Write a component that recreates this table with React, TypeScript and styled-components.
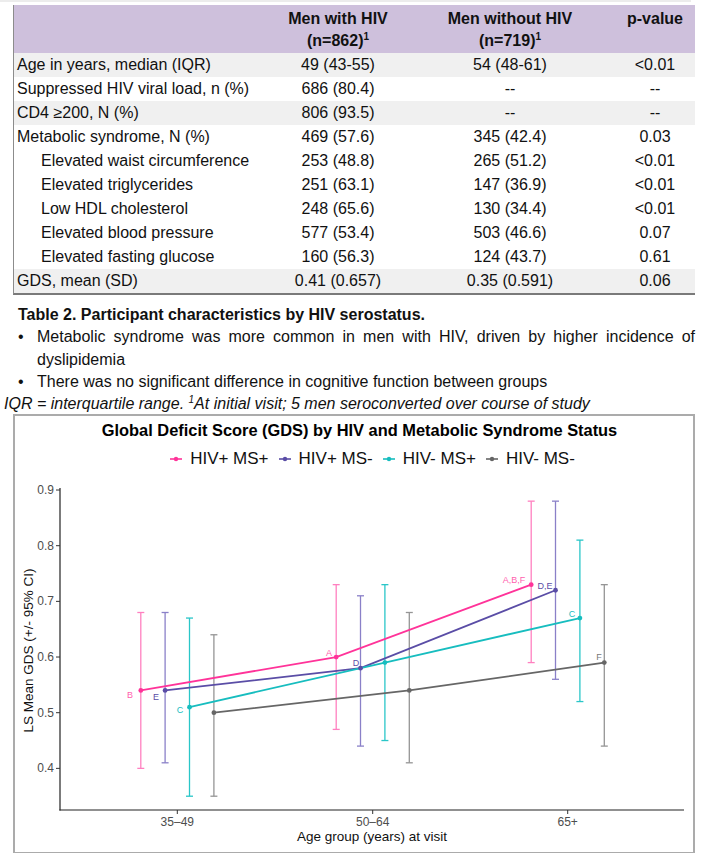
import React from 'react';
import styled, { createGlobalStyle } from 'styled-components';

const GlobalStyle = createGlobalStyle`
  body {
    margin: 0;
    background: #fff;
    font-family: "Liberation Sans", Arial, sans-serif;
    color: #111;
  }
`;

const Page = styled.div`
  width: 725px;
`;

const TopStrip = styled.div`
  width: 691px;
  height: 2px;
  background: #ececec;
`;

const Content = styled.div`
  padding-left: 13px;
`;

const Table = styled.div`
  margin-top: 3px;
  width: 682px;
  box-sizing: border-box;
  border-left: 1px solid #8c8c8c;
  border-bottom: 2px solid #7a7a7a;
  font-size: 16px;
`;

const Row = styled.div<{ $shade?: boolean }>`
  display: grid;
  grid-template-columns: 250px 148px 196px 87px;
  height: 24px;
  align-items: center;
  background: ${(p) => (p.$shade ? '#f0f0f0' : '#fff')};
`;

const HeadRow = styled(Row)`
  height: 48px;
  align-items: start;
  background: #cec0dc;
  font-weight: 700;
  line-height: 22px;
  padding-top: 3px;
  box-sizing: border-box;
`;

const Label = styled.div<{ $sub?: boolean }>`
  padding-left: ${(p) => (p.$sub ? '27px' : '3px')};
  white-space: nowrap;
`;

const Cell = styled.div<{ $shift?: number }>`
  text-align: center;
  padding-left: ${(p) => p.$shift ?? 0}px;
  white-space: nowrap;
`;

const Sup = styled.sup`
  font-size: 10px;
  line-height: 0;
  vertical-align: 6px;
`;

const Caption = styled.div`
  margin-top: 9px;
  padding-left: 5px;
  font-weight: 700;
  font-size: 16px;
  line-height: 22px;
`;

const Bullets = styled.ul`
  list-style: none;
  margin: 0;
  padding: 0;
  width: 682px;
  font-size: 16px;
  line-height: 22.5px;
`;

const Bullet = styled.li`
  display: grid;
  grid-template-columns: 19px 1fr;
  padding-left: 5px;
  text-align: justify;
`;

const Footnote = styled.div`
  margin-left: -9px;
  font-style: italic;
  font-size: 16px;
  line-height: 20px;
`;

const ChartBox = styled.div`
  width: 682px;
  height: 440px;
  box-sizing: border-box;
  border: 2px solid #ababab;
  display: flex;
  flex-direction: column;
`;

const ChartTitle = styled.div`
  padding: 4px 0 0 11px;
  text-align: center;
  font-weight: 700;
  font-size: 16.4px;
  line-height: 20px;
  color: #000;
`;

const Legend = styled.div`
  margin-top: 9px;
  padding-left: 36px;
  display: flex;
  justify-content: center;
  gap: 9px;
  font-size: 17px;
  line-height: 20px;
  color: #111;
`;

const LegendItem = styled.div`
  display: flex;
  align-items: center;
  gap: 7px;
`;

type TableRow = { label: string; a: string; b: string; p: string; shade?: boolean; sub?: boolean };

const rows: TableRow[] = [
  { label: 'Age in years, median (IQR)', a: '49 (43-55)', b: '54 (48-61)', p: '<0.01', shade: true },
  { label: 'Suppressed HIV viral load, n (%)', a: '686 (80.4)', b: '--', p: '--' },
  { label: 'CD4 ≥200, N (%)', a: '806 (93.5)', b: '--', p: '--', shade: true },
  { label: 'Metabolic syndrome, N (%)', a: '469 (57.6)', b: '345 (42.4)', p: '0.03' },
  { label: 'Elevated waist circumference', a: '253 (48.8)', b: '265 (51.2)', p: '<0.01', sub: true },
  { label: 'Elevated triglycerides', a: '251 (63.1)', b: '147 (36.9)', p: '<0.01', sub: true },
  { label: 'Low HDL cholesterol', a: '248 (65.6)', b: '130 (34.4)', p: '<0.01', sub: true },
  { label: 'Elevated blood pressure', a: '577 (53.4)', b: '503 (46.6)', p: '0.07', sub: true },
  { label: 'Elevated fasting glucose', a: '160 (56.3)', b: '124 (43.7)', p: '0.61', sub: true },
  { label: 'GDS, mean (SD)', a: '0.41 (0.657)', b: '0.35 (0.591)', p: '0.06', shade: true },
];

type Series = { name: string; line: string; bar: string; dx: number; pts: [number, number, number][] };

const series: Series[] = [
  { name: 'HIV+ MS+', line: '#ff3399', bar: '#ff80c0', dx: -36.5, pts: [[0.54, 0.4, 0.68], [0.6, 0.47, 0.73], [0.73, 0.59, 0.88]] },
  { name: 'HIV+ MS-', line: '#5a4da6', bar: '#8a80c8', dx: -12.2, pts: [[0.54, 0.41, 0.68], [0.58, 0.44, 0.71], [0.72, 0.56, 0.88]] },
  { name: 'HIV- MS+', line: '#17bdbf', bar: '#2ac6c8', dx: 12.2, pts: [[0.51, 0.35, 0.67], [0.59, 0.45, 0.73], [0.67, 0.52, 0.81]] },
  { name: 'HIV- MS-', line: '#666666', bar: '#959595', dx: 36.6, pts: [[0.5, 0.35, 0.64], [0.54, 0.41, 0.68], [0.59, 0.44, 0.73]] },
];

const groupX = [177.3, 372.7, 567.7];
const groupLabels = ['35–49', '50–64', '65+'];
const yTicks = [0.4, 0.5, 0.6, 0.7, 0.8, 0.9];
const yOf = (v: number) => 709.7 - (v - 0.5) * 556.7;

const letters = [
  { t: 'B', x: 130, y: 692, c: '#ff5fae' },
  { t: 'E', x: 156, y: 694, c: '#5a4da6' },
  { t: 'C', x: 180, y: 707, c: '#17bdbf' },
  { t: 'A', x: 329, y: 650, c: '#ff5fae' },
  { t: 'D', x: 356, y: 660, c: '#5a4da6' },
  { t: 'A,B,F', x: 514, y: 577, c: '#ff5fae' },
  { t: 'D,E', x: 545, y: 583, c: '#5a4da6' },
  { t: 'C', x: 572, y: 611, c: '#17bdbf' },
  { t: 'F', x: 599, y: 654, c: '#777' },
];

const LegendKey = ({ color }: { color: string }) => (
  <svg width="14" height="8" viewBox="0 0 14 8">
    <line x1="1" y1="4" x2="13" y2="4" stroke={color} strokeWidth="1.6" />
    <circle cx="7" cy="4" r="2.2" fill={color} />
  </svg>
);

const Plot = () => (
  <svg width="678" height="383" viewBox="15 466 678 383" fontFamily='"Liberation Sans", Arial, sans-serif'>
    {/* axes */}
    <line x1="60" y1="485" x2="60" y2="807.5" stroke="#222" strokeWidth="1.2" />
    <line x1="59.4" y1="807" x2="684" y2="807" stroke="#222" strokeWidth="1.2" />
    {yTicks.map((v) => (
      <g key={v}>
        <line x1="56" y1={yOf(v)} x2="60" y2={yOf(v)} stroke="#333" strokeWidth="1" />
        <text x="54" y={yOf(v) + 4} textAnchor="end" fontSize="12" fill="#4d4d4d">
          {v.toFixed(1)}
        </text>
      </g>
    ))}
    {groupX.map((x, i) => (
      <g key={x}>
        <line x1={x} y1="807" x2={x} y2="811" stroke="#333" strokeWidth="1" />
        <text x={x} y="823" textAnchor="middle" fontSize="12" fill="#4d4d4d">
          {groupLabels[i]}
        </text>
      </g>
    ))}
    <text x="372" y="838" textAnchor="middle" fontSize="13.5" fill="#111">
      Age group (years) at visit
    </text>
    <text x="0" y="0" transform="translate(33 647.5) rotate(-90)" textAnchor="middle" fontSize="13.5" fill="#111">
      LS Mean GDS (+/- 95% CI)
    </text>

    {/* error bars */}
    {series.map((s) =>
      s.pts.map(([, lo, hi], i) => {
        const x = groupX[i] + s.dx;
        return (
          <g key={s.name + i} stroke={s.bar} strokeWidth="1.3">
            <line x1={x} y1={yOf(lo)} x2={x} y2={yOf(hi)} />
            <line x1={x - 3.5} y1={yOf(lo)} x2={x + 3.5} y2={yOf(lo)} />
            <line x1={x - 3.5} y1={yOf(hi)} x2={x + 3.5} y2={yOf(hi)} />
          </g>
        );
      })
    )}

    {/* mean lines */}
    {series.map((s) => (
      <polyline
        key={s.name}
        points={s.pts.map(([m], i) => `${groupX[i] + s.dx},${yOf(m)}`).join(' ')}
        fill="none"
        stroke={s.line}
        strokeWidth="1.8"
      />
    ))}
    {series.map((s) =>
      s.pts.map(([m], i) => <circle key={s.name + 'p' + i} cx={groupX[i] + s.dx} cy={yOf(m)} r="2.4" fill={s.line} />)
    )}

    {letters.map((l, i) => (
      <text key={i} x={l.x} y={l.y + 3} textAnchor="middle" fontSize="9" fill={l.c}>
        {l.t}
      </text>
    ))}
  </svg>
);

export default function App() {
  return (
    <Page>
      <GlobalStyle />
      <TopStrip />
      <Content>
        <Table>
          <HeadRow>
            <Label />
            <Cell>
              Men with HIV
              <br />
              (n=862)<Sup>1</Sup>
            </Cell>
            <Cell>
              Men without HIV
              <br />
              (n=719)<Sup>1</Sup>
            </Cell>
            <Cell $shift={7}>p-value</Cell>
          </HeadRow>
          {rows.map((r) => (
            <Row key={r.label} $shade={r.shade}>
              <Label $sub={r.sub}>{r.label}</Label>
              <Cell>{r.a}</Cell>
              <Cell>{r.b}</Cell>
              <Cell $shift={7}>{r.p}</Cell>
            </Row>
          ))}
        </Table>

        <Caption>Table 2. Participant characteristics by HIV serostatus.</Caption>
        <Bullets>
          <Bullet>
            <span>•</span>
            <span>Metabolic syndrome was more common in men with HIV, driven by higher incidence of dyslipidemia</span>
          </Bullet>
          <Bullet>
            <span>•</span>
            <span>There was no significant difference in cognitive function between groups</span>
          </Bullet>
        </Bullets>
        <Footnote>
          IQR = interquartile range. <Sup>1</Sup>At initial visit; 5 men seroconverted over course of study
        </Footnote>

        <ChartBox>
          <ChartTitle>Global Deficit Score (GDS) by HIV and Metabolic Syndrome Status</ChartTitle>
          <Legend>
            {series.map((s) => (
              <LegendItem key={s.name}>
                <LegendKey color={s.line} />
                <span>{s.name}</span>
              </LegendItem>
            ))}
          </Legend>
          <Plot />
        </ChartBox>
      </Content>
    </Page>
  );
}
